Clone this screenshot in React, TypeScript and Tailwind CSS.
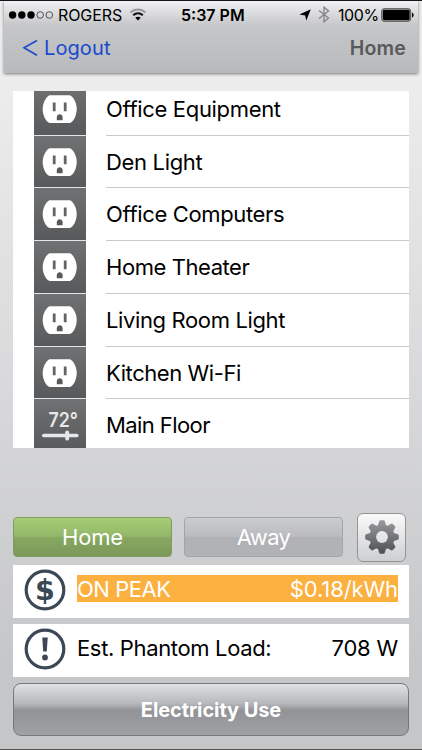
import type { ReactNode } from 'react';

interface Device {
  name: string;
  kind: 'outlet' | 'thermostat';
  tracking: string;
}

const devices: Device[] = [
  { name: 'Office Equipment', kind: 'outlet', tracking: 'tracking-[-0.33px]' },
  { name: 'Den Light', kind: 'outlet', tracking: 'tracking-[-0.33px]' },
  { name: 'Office Computers', kind: 'outlet', tracking: 'tracking-[-0.35px]' },
  { name: 'Home Theater', kind: 'outlet', tracking: 'tracking-[-0.43px]' },
  { name: 'Living Room Light', kind: 'outlet', tracking: 'tracking-[-0.37px]' },
  { name: 'Kitchen Wi-Fi', kind: 'outlet', tracking: 'tracking-[-0.43px]' },
  { name: 'Main Floor', kind: 'thermostat', tracking: 'tracking-[-0.58px]' },
];

const teeth = [0, 45, 90, 135, 180, 225, 270, 315];

function OutletIcon() {
  return (
    <svg width="52" height="52" viewBox="0 0 52 52">
      <path
        d="M15.5 12.3H36C39.5 14 42.7 20 42.7 26.2C42.7 32.5 39.5 38.5 36 40H15.5C12 38.5 8.7 32.5 8.7 26.2C8.7 20 12 14 15.5 12.3Z"
        fill="#fff"
      />
      <path d="M18.8 19.5h2.8v8.8h-2.8zM29.8 19.5h2.8v8.8h-2.8z" fill="#636466" />
      <path d="M22.8 37.2v-3c0-4 5.8-4 5.8 0v3z" fill="#58595b" />
    </svg>
  );
}

function ThermostatIcon() {
  return (
    <svg width="52" height="52" viewBox="0 0 52 52">
      <text
        x="14.5"
        y="27.5"
        fill="#e6e7e9"
        fontFamily="Inter, sans-serif"
        fontSize="19.5"
        fontWeight="600"
        textLength="29.5"
        lengthAdjust="spacingAndGlyphs"
      >
        72°
      </text>
      <path d="M9.8 36.5h33" stroke="#e6e7e9" strokeWidth="3.6" strokeLinecap="round" />
      <path d="M33.2 33.3v6.4" stroke="#e6e7e9" strokeWidth="3.8" strokeLinecap="round" />
    </svg>
  );
}

function DeviceRow({ device }: { device: Device }) {
  return (
    <li className="flex h-[52.75px] shrink-0 pl-[20.5px]">
      <div className="w-[52.5px] shrink-0 overflow-hidden border-b border-[#e4e4e5] bg-linear-to-b from-[#707173] to-[#58595b]">
        {device.kind === 'outlet' ? <OutletIcon /> : <ThermostatIcon />}
      </div>
      <div className="ml-[20px] flex-1 border-b border-[#c9c9cb]">
        <p className={`pt-[12px] text-[22px] leading-[28px] ${device.tracking}`}>{device.name}</p>
      </div>
    </li>
  );
}

function StatusBar() {
  return (
    <div className="flex h-[27px] items-center pl-[5px]">
      <svg width="45" height="8" viewBox="0 0 45 8">
        <circle cx="3.6" cy="4" r="3.7" />
        <circle cx="12.8" cy="4" r="3.7" />
        <circle cx="22" cy="4" r="3.7" />
        <circle cx="31.2" cy="4" r="3.3" fill="none" stroke="#333" strokeWidth=".8" />
        <circle cx="40.3" cy="4" r="3.3" fill="none" stroke="#333" strokeWidth=".8" />
      </svg>
      <span className="ml-[4px] w-[65px] text-[16px] tracking-[-0.1px] whitespace-nowrap">ROGERS</span>
      <svg className="ml-[6px]" width="18" height="13" viewBox="0 0 18 13">
        <path d="M1.5 4.5C5.8.4 12.2.4 16.5 4.5" fill="none" stroke="#999a9c" strokeWidth="2" />
        <path d="M4.2 7.2C7 4.7 11 4.7 13.8 7.2" fill="none" stroke="#111" strokeWidth="2.2" />
        <path d="M6.3 9.7C7.8 8.3 10.2 8.3 11.7 9.7L9 12.5Z" />
      </svg>
      <span className="ml-[34px] w-[64px] text-[16px] font-semibold whitespace-nowrap">5:37 PM</span>
      <svg className="ml-[54px]" width="12" height="12" viewBox="0 0 12 12">
        <path d="M11.8.3L7.2 11.7L6.2 6.4L.3 5.5Z" />
      </svg>
      <svg className="ml-[7px]" width="12" height="17" viewBox="0 0 12 17">
        <path
          d="M1 4.5L10.5 12L6 15.8V1.2L10.5 5L1 12.5"
          fill="none"
          stroke="#858688"
          strokeWidth="1.4"
        />
      </svg>
      <span className="ml-[8px] w-[40px] text-[16px] tracking-[-0.4px] whitespace-nowrap">100%</span>
      <svg className="ml-[3px]" width="34" height="14" viewBox="0 0 34 14">
        <rect x=".7" y=".7" width="29" height="12.6" rx="2.5" fill="#8c8d8f" stroke="#555" />
        <rect x="2" y="2" width="26.5" height="10" rx="1.2" />
        <path d="M31 4.5c2.2.8 2.2 4.2 0 5z" />
      </svg>
    </div>
  );
}

function GearIcon() {
  return (
    <svg width="36" height="36" viewBox="0 0 36 36">
      <defs>
        <linearGradient id="gear-fill" x1="0" y1="0" x2="0" y2="1">
          <stop offset="0" stopColor="#9c9da0" />
          <stop offset="1" stopColor="#4c4d50" />
        </linearGradient>
        <mask id="gear-shape">
          <circle cx="18" cy="18" r="12.6" fill="#fff" />
          {teeth.map((angle) => (
            <path
              key={angle}
              d="M13.6 7.5L15.2 2.2Q15.4 1.2 16.4 1.2H19.6Q20.6 1.2 20.8 2.2L22.4 7.5Z"
              fill="#fff"
              transform={`rotate(${angle} 18 18)`}
            />
          ))}
          <circle cx="18" cy="18" r="5.9" fill="#000" />
        </mask>
      </defs>
      <rect width="36" height="36" fill="url(#gear-fill)" mask="url(#gear-shape)" />
    </svg>
  );
}

function RoundIcon({ children }: { children: ReactNode }) {
  return (
    <svg className="ml-[11px] shrink-0" width="42" height="42" viewBox="0 0 42 42">
      <circle cx="21" cy="21" r="18.8" fill="none" stroke="#3c4855" strokeWidth="3.2" />
      {children}
    </svg>
  );
}

export default function App() {
  return (
    <div className="flex h-[750px] w-[422px] flex-col overflow-hidden border-t border-[#161319] border-b border-b-[#555] bg-linear-to-b from-[#ededee] from-10% to-[#c5c6c8] to-90% font-[Inter,sans-serif] text-black">
      <header className="mx-[4px] h-[72px] shrink-0 bg-linear-to-b from-[#f0f0f2] via-[#c5c6c8] via-35% to-[#b9babc] shadow-[0_1px_3px_#777]">
        <StatusBar />
        <nav className="flex h-[40px] items-center justify-between pr-[12px] pl-[18px]">
          <a className="flex items-center text-[20px] text-[#1849ce]">
            <svg width="16" height="18" viewBox="0 0 16 18">
              <path d="M15 1.5L2 8.8L15 16.2" fill="none" stroke="#1849ce" strokeWidth="1.6" />
            </svg>
            <span className="ml-[6px] tracking-[0.1px]">Logout</span>
          </a>
          <h1 className="pt-[2px] text-[19.5px] font-semibold tracking-[0.2px] text-[#58595b]">Home</h1>
        </nav>
      </header>

      <ul className="mx-[13px] mt-[18px] flex h-[357px] shrink-0 flex-col justify-end overflow-hidden bg-white">
        {devices.map((device) => (
          <DeviceRow key={device.name} device={device} />
        ))}
        <li className="-mb-[4px]" />
      </ul>

      <div className="mt-[65px] ml-[13px] flex h-[48px] shrink-0 items-center">
        <button className="h-[40px] w-[159px] rounded-[4px] border border-[#829b66] bg-[linear-gradient(#a6cd74,#93b769_48%,#87a861_52%,#7b9859)] text-[22px] tracking-[-0.2px] text-white">
          Home
        </button>
        <button className="ml-[12px] h-[40px] w-[159px] rounded-[4px] border border-[#a3a4a7] bg-[linear-gradient(#cbccce,#babbbe_48%,#b0b1b4_52%,#b2b3b6)] text-[22px] tracking-[-0.7px] text-white">
          Away
        </button>
        <button className="ml-[14px] flex h-[49px] w-[49px] items-center justify-center rounded-[6px] border border-[#939496] bg-linear-to-b from-[#fafafa] to-[#cecfd1]">
          <GearIcon />
        </button>
      </div>

      <section className="mx-[13px] mt-[4px] flex h-[53px] shrink-0 bg-white">
        <div className="pt-[4px]">
          <RoundIcon>
            <text
              x="21"
              y="31"
              textAnchor="middle"
              fill="#3c4855"
              fontFamily="'DejaVu Sans', sans-serif"
              fontSize="28.5"
              fontWeight="700"
            >
              $
            </text>
          </RoundIcon>
        </div>
        <div className="mt-[10px] mr-[11px] ml-[11px] flex h-[27px] flex-1 items-center justify-between bg-[#fbb040] pt-[2px] text-[22px] text-white">
          <span className="tracking-[-0.45px]">ON PEAK</span>
          <span className="tracking-[-0.1px]">$0.18/kWh</span>
        </div>
      </section>

      <section className="mx-[13px] mt-[6px] flex h-[53px] shrink-0 bg-white">
        <div className="pt-[4px]">
          <RoundIcon>
            <path d="M18.3 9.5h5.4l-.9 14h-3.6z" fill="#3c4855" />
            <circle cx="21" cy="29.5" r="2.9" fill="#3c4855" />
          </RoundIcon>
        </div>
        <div className="mt-[11px] mr-[11px] ml-[11px] flex h-[27px] flex-1 items-center justify-between text-[22px]">
          <span className="tracking-[-0.35px]">Est. Phantom Load:</span>
          <span className="tracking-[-0.2px]">708 W</span>
        </div>
      </section>

      <button className="mx-[13px] mt-[6px] h-[53px] shrink-0 rounded-[8px] border border-[#77787b] bg-[linear-gradient(#dfe2e5,#b6b8bb_38%,#929397_52%,#a0a1a5)] text-[20px] font-bold tracking-[-0.1px] text-white">
        Electricity Use
      </button>
    </div>
  );
}
